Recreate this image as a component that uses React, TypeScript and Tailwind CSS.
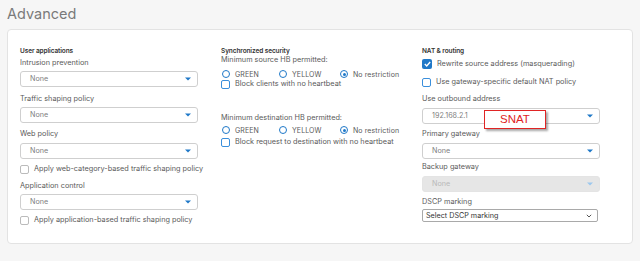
import React from "react";

const font = { fontFamily: "Inter, 'Noto Sans', sans-serif" };

function Select({ value, disabled = false }: { value: string; disabled?: boolean }) {
  return (
    <div
      className={`flex h-[16px] w-[178px] items-center justify-between rounded-[3px] border px-[9px] ${
        disabled ? "border-[#e4e4e4] bg-[#e6e6e6]" : "border-[#cfcfcf] bg-white"
      }`}
    >
      <span className={`text-[7.2px] leading-none ${disabled ? "text-[#b9b9b9]" : "text-[#808080]"}`}>{value}</span>
      <svg width="6" height="4" viewBox="0 0 6 4" className="mr-[-3px]">
        <path d="M0 0.5 L6 0.5 L3 3.5 Z" fill={disabled ? "#9cc8ee" : "#1f78c8"} />
      </svg>
    </div>
  );
}

function Label({ children, className = "" }: { children: React.ReactNode; className?: string }) {
  return <div className={`h-[10px] text-[7.3px] leading-[10px] text-[#5a5a5a] ${className}`}>{children}</div>;
}

function Heading({ children }: { children: React.ReactNode }) {
  return <div className="h-[8px] text-[6.5px] font-semibold leading-[8px] tracking-[-0.1px] text-[#333]">{children}</div>;
}

function Check({ label, checked = false, className = "", gray = false }: { label: string; checked?: boolean; className?: string; gray?: boolean }) {
  return (
    <div className={`flex h-[10px] items-center ${className}`}>
      {checked ? (
        <div className="flex h-[10px] w-[10px] items-center justify-center rounded-[2px] bg-[#1f78c8]">
          <svg width="7" height="6" viewBox="0 0 7 6">
            <path d="M0.8 3 L2.7 4.9 L6.2 1" stroke="white" strokeWidth="1.4" fill="none" />
          </svg>
        </div>
      ) : (
        <div className={`h-[9px] w-[9px] rounded-[2px] border ${gray ? "border-[#bbb]" : "border-[#3a8fdc]"}`} />
      )}
      <span className="ml-[5px] text-[7.3px] leading-none text-[#5a5a5a]">{label}</span>
    </div>
  );
}

function Radio({ label, checked = false, w }: { label: string; checked?: boolean; w: string }) {
  return (
    <div className={`flex items-center ${w}`}>
      <div className="flex h-[8px] w-[8px] items-center justify-center rounded-full border-[1.2px] border-[#1f78c8]">
        {checked && <div className="h-[3px] w-[3px] rounded-full bg-[#1f78c8]" />}
      </div>
      <span className="ml-[5px] text-[7px] leading-none tracking-[0.1px] text-[#5a5a5a]">{label}</span>
    </div>
  );
}

function RadioRow({ className = "" }: { className?: string }) {
  return (
    <div className={`flex h-[10px] items-center pl-[1px] ${className}`}>
      <Radio label="GREEN" w="w-[57px]" />
      <Radio label="YELLOW" w="w-[61px]" />
      <Radio label="No restriction" checked w="" />
    </div>
  );
}

export default function App() {
  return (
    <div className="h-[261px] w-[640px] overflow-hidden bg-[#f6f6f6]" style={font}>
      <div className="pl-[7px] pt-[5px] text-[14.5px] leading-[18px] text-[#7a7a7a]">Advanced</div>
      <div className="ml-[7px] mt-[6px] h-[215px] w-[626px] rounded-[4px] border border-[#e3e3e3] bg-white pl-[12px] pt-[17px]">
        <div className="flex">
          {/* Column 1 */}
          <div className="w-[201px]">
            <Heading>User applications</Heading>
            <Label className="mt-[3px]">Intrusion prevention</Label>
            <div className="mt-[3px]">
              <Select value="None" />
            </div>
            <Label className="mt-[7px]">Traffic shaping policy</Label>
            <div className="mt-[3px]">
              <Select value="None" />
            </div>
            <Label className="mt-[6px]">Web policy</Label>
            <div className="mt-[4px]">
              <Select value="None" />
            </div>
            <Check label="Apply web-category-based traffic shaping policy" gray className="mt-[5px]" />
            <Label className="mt-[7px]">Application control</Label>
            <div className="mt-[3px]">
              <Select value="None" />
            </div>
            <Check label="Apply application-based traffic shaping policy" gray className="mt-[5px]" />
          </div>

          {/* Column 2 */}
          <div className="w-[201px]">
            <Heading>Synchronized security</Heading>
            <Label className="mt-[0px]">Minimum source HB permitted:</Label>
            <RadioRow className="mt-[4px]" />
            <Check label="Block clients with no heartbeat" className="mt-[0px]" />
            <Label className="mt-[24px]">Minimum destination HB permitted:</Label>
            <RadioRow className="mt-[2px]" />
            <Check label="Block request to destination with no heartbeat" className="mt-[2px]" />
          </div>

          {/* Column 3 */}
          <div className="w-[200px]">
            <Heading>NAT &amp; routing</Heading>
            <Check label="Rewrite source address (masquerading)" checked className="mt-[4px]" />
            <Check label="Use gateway-specific default NAT policy" className="mt-[8px]" />
            <Label className="mt-[7px]">Use outbound address</Label>
            <div className="relative mt-[4px]">
              <Select value="192.168.2.1" />
              <div className="absolute left-[62px] top-[2px] flex h-[19px] w-[62px] items-center justify-center border border-[#e02424] bg-white shadow-[2px_2px_2px_rgba(0,0,0,0.35)]">
                <span className="text-[11.5px] leading-none text-[#e02424]" style={{ fontFamily: "'Liberation Sans', Arial, sans-serif" }}>
                  SNAT
                </span>
              </div>
            </div>
            <Label className="mt-[5px]">Primary gateway</Label>
            <div className="mt-[4px]">
              <Select value="None" />
            </div>
            <Label className="mt-[3px]">Backup gateway</Label>
            <div className="mt-[4px]">
              <Select value="None" disabled />
            </div>
            <Label className="mt-[5px]">DSCP marking</Label>
            <div className="mt-[2px] flex h-[13px] w-[176px] items-center justify-between rounded-[2px] border border-[#a9a9a9] bg-white pl-[3px] pr-[5px]">
              <span className="text-[7.2px] leading-none text-[#333]">Select DSCP marking</span>
              <svg width="6" height="4" viewBox="0 0 6 4">
                <path d="M0.8 0.8 L3 3 L5.2 0.8" stroke="#555" strokeWidth="1" fill="none" />
              </svg>
            </div>
          </div>
        </div>
      </div>
    </div>
  );
}
